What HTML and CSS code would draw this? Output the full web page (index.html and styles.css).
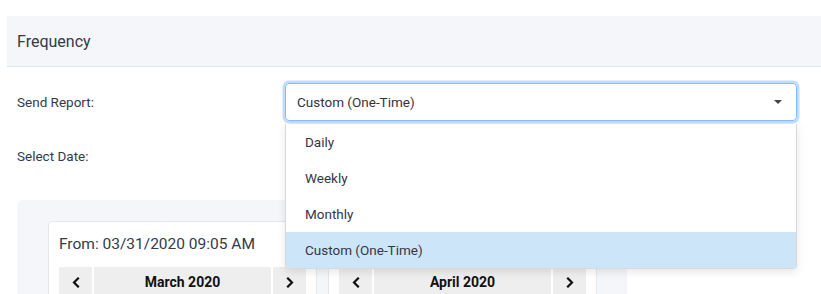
FILE: index.html
```html
<!DOCTYPE html>
<html lang="en">
<head>
<meta charset="UTF-8">
<title>Frequency</title>
<link rel="stylesheet" href="styles.css">
</head>
<body>

<div class="section">
  <div class="section-head">Frequency</div>

  <div class="form-row">
    <label class="form-label">Send Report:</label>
    <div class="select-wrap">
      <div class="select-box">
        <span>Custom (One-Time)</span>
        <span class="caret"></span>
      </div>
      <ul class="select-menu">
        <li>Daily</li>
        <li>Weekly</li>
        <li>Monthly</li>
        <li class="active">Custom (One-Time)</li>
      </ul>
    </div>
  </div>

  <div class="form-row">
    <label class="form-label">Select Date:</label>
  </div>

  <div class="date-panel">
    <div class="cal-card">
      <div class="cal-title">From: 03/31/2020 09:05 AM</div>
      <div class="cal-head">
        <div class="cal-btn"><svg width="8" height="11" viewBox="0 0 8 11"><polyline points="6,1.5 2,5.5 6,9.5"/></svg></div>
        <div class="cal-month">March 2020</div>
        <div class="cal-btn"><svg width="8" height="11" viewBox="0 0 8 11"><polyline points="2,1.5 6,5.5 2,9.5"/></svg></div>
      </div>
    </div>
    <div class="cal-card">
      <div class="cal-title"></div>
      <div class="cal-head">
        <div class="cal-btn"><svg width="8" height="11" viewBox="0 0 8 11"><polyline points="6,1.5 2,5.5 6,9.5"/></svg></div>
        <div class="cal-month">April 2020</div>
        <div class="cal-btn"><svg width="8" height="11" viewBox="0 0 8 11"><polyline points="2,1.5 6,5.5 2,9.5"/></svg></div>
      </div>
    </div>
  </div>
</div>

</body>
</html>
```

FILE: styles.css
```css
/* -------- RESET -------- */
*{margin:0;padding:0;box-sizing:border-box}

:root{
  --panel:#f5f6fa;
  --line:#e2e5ea;
  --text:#343a48;
  --focus:#80bdff;
}

body{
  font-family:Roboto,'Liberation Sans',Arial,sans-serif;
  color:var(--text);
  background:#fff;
  padding:16px 0 0 7px;
  overflow:hidden;
}

/* -------- SECTION -------- */
.section-head{
  background:var(--panel);
  border-bottom:1px solid var(--line);
  height:51px;
  padding:0 10px;
  display:flex;align-items:center;
  font-size:16px;
}

.form-row{
  display:flex;align-items:center;
  padding:16px 24px 0 10px;
  min-height:54px;
}
.form-label{width:268px;font-size:13.5px;flex:none}

/* -------- SELECT -------- */
.select-wrap{flex:1;position:relative}
.select-box{
  height:38px;
  border:1px solid var(--focus);
  border-radius:4px;
  box-shadow:0 0 0 2.5px rgba(0,123,255,.25);
  display:flex;align-items:center;justify-content:space-between;
  padding:0 14px 0 11px;
  font-size:13.5px;
  color:#2f3440;
}
.caret{
  width:0;height:0;
  border-left:4px solid transparent;
  border-right:4px solid transparent;
  border-top:4px solid #444;
}
.select-menu{
  position:absolute;left:0;right:0;top:41px;
  list-style:none;
  background:#fff;
  border:1px solid #d6d9de;
  border-top:0;
  border-radius:0 0 4px 4px;
  box-shadow:0 3px 8px rgba(0,0,0,.1);
  overflow:hidden;
  z-index:5;
}
.select-menu li{
  height:36px;
  display:flex;align-items:center;
  padding-left:19px;
  font-size:13.5px;
  color:#363644;
}
.select-menu li.active{background:#cce5f8}

/* -------- DATE PANEL -------- */
.date-panel{
  margin:25px 0 0 10px;
  width:610px;
  background:var(--panel);
  border-radius:6px 6px 0 0;
  padding:21px 30px 10px 31px;
  display:flex;gap:11px;
}
.cal-card{
  width:269px;
  background:#fff;
  border:1px solid #e4e7ec;
  border-radius:4px;
  padding:11px 10px 10px 10px;
}
.cal-title{font-size:15.5px;height:34px;line-height:22px}
.cal-head{display:flex;gap:2px;height:30px}
.cal-btn{
  width:33px;flex:none;
  background:#eee;
  display:flex;align-items:center;justify-content:center;
}
.cal-btn svg polyline{fill:none;stroke:#111;stroke-width:2.2;stroke-linecap:square}
.cal-month{
  flex:1;background:#eee;
  display:flex;align-items:center;justify-content:center;
  font-weight:700;font-size:14px;color:#111;
}
```
